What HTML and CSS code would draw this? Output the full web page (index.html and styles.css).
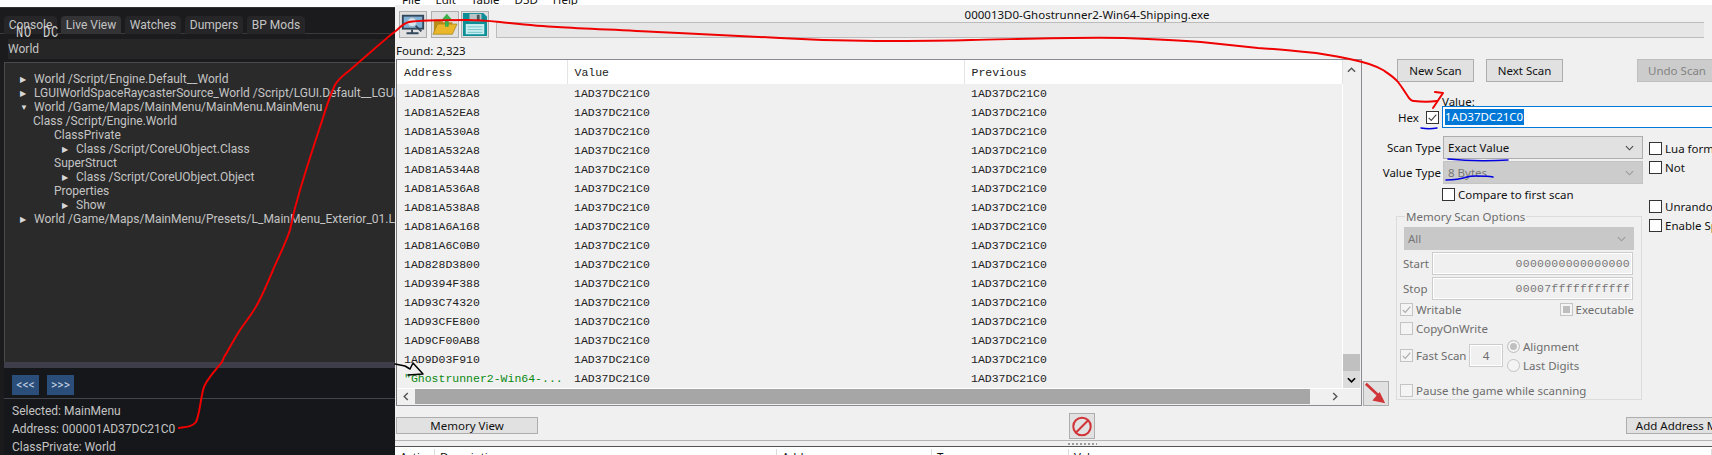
FILE: index.html
```html
<!DOCTYPE html>
<html lang="en">
<head>
<meta charset="UTF-8">
<title>Cheat Engine scan</title>
<link rel="stylesheet" href="styles.css">
</head>
<body>
<div class="page">

  <div class="dbg">
    <div class="dbg-strip"></div>
    <div class="dbg-tabs">
      <span class="tab tab-console">Console</span>
      <span class="tab tab-live">Live View</span>
      <span class="tab tab-watches">Watches</span>
      <span class="tab tab-dumpers">Dumpers</span>
      <span class="tab tab-bp">BP Mods</span>
    </div>
    <div class="dbg-search">World</div>
    <div class="dbg-tree">
      <div class="node"><span class="tw">&#9654;</span>World /Script/Engine.Default__World</div>
      <div class="node"><span class="tw">&#9654;</span>LGUIWorldSpaceRaycasterSource_World /Script/LGUI.Default__LGUIWorldSpaceRaycasterSource_World</div>
      <div class="node"><span class="tw">&#9660;</span>World /Game/Maps/MainMenu/MainMenu.MainMenu</div>
      <div class="node lvl1">Class /Script/Engine.World</div>
      <div class="node lvl2">ClassPrivate</div>
      <div class="node lvl3"><span class="tw">&#9654;</span>Class /Script/CoreUObject.Class</div>
      <div class="node lvl2">SuperStruct</div>
      <div class="node lvl3"><span class="tw">&#9654;</span>Class /Script/CoreUObject.Object</div>
      <div class="node lvl2">Properties</div>
      <div class="node lvl3"><span class="tw">&#9654;</span>Show</div>
      <div class="node"><span class="tw">&#9654;</span>World /Game/Maps/MainMenu/Presets/L_MainMenu_Exterior_01.L_MainMenu_Exterior_01</div>
    </div>
    <div class="dbg-split"></div>
    <div class="dbg-info">
      <div class="dbg-nav">
        <button class="nav-btn">&lt;&lt;&lt;</button>
        <button class="nav-btn">&gt;&gt;&gt;</button>
      </div>
      <div class="info-line">Selected: MainMenu</div>
      <div class="info-line">Address: 000001AD37DC21C0</div>
      <div class="info-line">ClassPrivate: World</div>
    </div>
  </div>

  <div class="ce">
    <div class="ce-menu"><span><u>F</u>ile</span><span><u>E</u>dit</span><span><u>T</u>able</span><span><u>D</u>3D</span><span><u>H</u>elp</span></div>
    <div class="ce-top">
      <div class="tools">
        <button class="tool">
          <svg viewBox="0 0 28 27" width="26" height="25"><rect x="2" y="3" width="24" height="16" fill="#33475b"/><rect x="4" y="5" width="20" height="12" fill="#7fb2d6"/><circle cx="13" cy="11" r="5" fill="#d5e6f2" stroke="#9ab3c6" stroke-width="1.5"/><path d="M17 15l6 6" stroke="#33475b" stroke-width="2"/><path d="M13 19v3M7 23h13" stroke="#33475b" stroke-width="2"/></svg>
        </button>
        <button class="tool">
          <svg viewBox="0 0 28 27" width="26" height="25"><path d="M2 8h8l2 3h10v12H2z" fill="#b98f1c"/><path d="M6 13h21l-5 11H1z" fill="#eab72b" stroke="#9a7a18" stroke-width=".7"/><path d="M14 16V9h-4l6-7 6 7h-4v7z" fill="#3cb04a"/></svg>
        </button>
        <button class="tool">
          <svg viewBox="0 0 28 27" width="26" height="25"><path d="M1 1h22l4 4v21H1z" fill="#0e8f97"/><rect x="8" y="2" width="13" height="8" fill="#b9c4c6"/><rect x="16" y="3" width="3" height="6" fill="#46585c"/><rect x="4" y="13" width="20" height="11" fill="#c9eef0"/><path d="M6 16h16M6 19h16M6 22h16" stroke="#6fc2c8"/></svg>
        </button>
      </div>
      <div class="top-right">
        <div class="ce-title">000013D0-Ghostrunner2-Win64-Shipping.exe</div>
        <div class="ce-progress"></div>
      </div>
    </div>

    <div class="ce-main">
      <div class="results">
        <div class="found">Found: 2,323</div>
        <div class="list-row">
          <div class="list">
            <div class="list-top">
              <table class="hits">
                <thead>
                  <tr><th class="col-addr">Address</th><th class="col-val">Value</th><th>Previous</th></tr>
                </thead>
                <tbody>
                  <tr><td>1AD81A528A8</td><td>1AD37DC21C0</td><td>1AD37DC21C0</td></tr>
                  <tr><td>1AD81A52EA8</td><td>1AD37DC21C0</td><td>1AD37DC21C0</td></tr>
                  <tr><td>1AD81A530A8</td><td>1AD37DC21C0</td><td>1AD37DC21C0</td></tr>
                  <tr><td>1AD81A532A8</td><td>1AD37DC21C0</td><td>1AD37DC21C0</td></tr>
                  <tr><td>1AD81A534A8</td><td>1AD37DC21C0</td><td>1AD37DC21C0</td></tr>
                  <tr><td>1AD81A536A8</td><td>1AD37DC21C0</td><td>1AD37DC21C0</td></tr>
                  <tr><td>1AD81A538A8</td><td>1AD37DC21C0</td><td>1AD37DC21C0</td></tr>
                  <tr><td>1AD81A6A168</td><td>1AD37DC21C0</td><td>1AD37DC21C0</td></tr>
                  <tr><td>1AD81A6C0B0</td><td>1AD37DC21C0</td><td>1AD37DC21C0</td></tr>
                  <tr><td>1AD828D3800</td><td>1AD37DC21C0</td><td>1AD37DC21C0</td></tr>
                  <tr><td>1AD9394F388</td><td>1AD37DC21C0</td><td>1AD37DC21C0</td></tr>
                  <tr><td>1AD93C74320</td><td>1AD37DC21C0</td><td>1AD37DC21C0</td></tr>
                  <tr><td>1AD93CFE800</td><td>1AD37DC21C0</td><td>1AD37DC21C0</td></tr>
                  <tr><td>1AD9CF00AB8</td><td>1AD37DC21C0</td><td>1AD37DC21C0</td></tr>
                  <tr><td>1AD9D03F910</td><td>1AD37DC21C0</td><td>1AD37DC21C0</td></tr>
                  <tr><td class="static">"Ghostrunner2-Win64-...</td><td>1AD37DC21C0</td><td>1AD37DC21C0</td></tr>
                </tbody>
              </table>
              <div class="vscroll">
                <svg class="chev-up" viewBox="0 0 10 6" width="9" height="6"><path d="M1 5l4-4 4 4" fill="none" stroke="#555" stroke-width="1.6"/></svg>
                <div class="vthumb"></div>
                <div class="vdown"><svg viewBox="0 0 10 6" width="9" height="6"><path d="M1 1l4 4 4-4" fill="none" stroke="#000" stroke-width="1.8"/></svg></div>
              </div>
            </div>
            <div class="hscroll">
              <div class="harrow"><svg viewBox="0 0 6 10" width="6" height="9"><path d="M5 1L1 5l4 4" fill="none" stroke="#555" stroke-width="1.6"/></svg></div>
              <div class="hthumb"></div>
              <div class="harrow harrow-r"><svg viewBox="0 0 6 10" width="6" height="9"><path d="M1 1l4 4-4 4" fill="none" stroke="#555" stroke-width="1.6"/></svg></div>
            </div>
          </div>
          <button class="tool tool-arrow">
            <svg viewBox="0 0 26 25" width="24" height="23"><path d="M2 2l14 13" stroke="#d13438" stroke-width="3"/><path d="M23 23l-14-3 8-9z" fill="#d13438"/></svg>
          </button>
        </div>
      </div>

      <div class="scan">
        <div class="scan-btns">
          <button class="btn">New Scan</button>
          <button class="btn">Next Scan</button>
          <button class="btn btn-off">Undo Scan</button>
        </div>
        <div class="value-label">Value:</div>
        <div class="value-row">
          <span class="hex">Hex</span>
          <span class="check"><svg viewBox="0 0 13 13" width="11" height="11"><path d="M2 7l3 3 6-7" fill="none" stroke="#444" stroke-width="1.3"/></svg></span>
          <div class="value-input"><span class="sel">1AD37DC21C0</span></div>
        </div>
        <div class="scan-body">
          <div class="scan-main">
            <div class="field">
              <label class="field-label">Scan Type</label>
              <div class="select">Exact Value<svg class="caret" viewBox="0 0 10 6" width="9" height="6"><path d="M1 1l4 4 4-4" fill="none" stroke="#444" stroke-width="1.2"/></svg></div>
            </div>
            <div class="field field-next">
              <label class="field-label">Value Type</label>
              <div class="select select-off">8 Bytes<svg class="caret" viewBox="0 0 10 6" width="9" height="6"><path d="M1 1l4 4 4-4" fill="none" stroke="#999" stroke-width="1.2"/></svg></div>
            </div>
            <div class="compare"><span class="check"></span>Compare to first scan</div>

            <div class="group">
              <div class="group-title">Memory Scan Options</div>
              <div class="select select-off select-all">All<svg class="caret" viewBox="0 0 10 6" width="9" height="6"><path d="M1 1l4 4 4-4" fill="none" stroke="#999" stroke-width="1.2"/></svg></div>
              <div class="range"><span class="range-label">Start</span><div class="range-input">0000000000000000</div></div>
              <div class="range"><span class="range-label">Stop</span><div class="range-input">00007fffffffffff</div></div>
              <div class="opt-row opt-first">
                <span class="opt"><span class="check check-off"><svg viewBox="0 0 13 13" width="11" height="11"><path d="M2 7l3 3 6-7" fill="none" stroke="#aaa" stroke-width="1.3"/></svg></span>Writable</span>
                <span class="opt"><span class="check check-off"><i class="mixed"></i></span>Executable</span>
              </div>
              <div class="opt-row"><span class="opt"><span class="check check-off"></span>CopyOnWrite</span></div>
              <div class="fast">
                <span class="opt"><span class="check check-off"><svg viewBox="0 0 13 13" width="11" height="11"><path d="M2 7l3 3 6-7" fill="none" stroke="#aaa" stroke-width="1.3"/></svg></span>Fast Scan</span>
                <div class="fast-input">4</div>
                <div class="radios">
                  <span class="opt"><span class="radio radio-on"></span>Alignment</span>
                  <span class="opt"><span class="radio"></span>Last Digits</span>
                </div>
              </div>
              <div class="opt-row opt-pause"><span class="opt"><span class="check check-off"></span>Pause the game while scanning</span></div>
            </div>
          </div>
          <div class="scan-side">
            <div class="side-opt"><span class="check"></span>Lua formula</div>
            <div class="side-opt"><span class="check"></span>Not</div>
            <div class="side-opt side-gap"><span class="check"></span>Unrandomizer</div>
            <div class="side-opt"><span class="check"></span>Enable Speedhack</div>
          </div>
        </div>
      </div>
    </div>

    <div class="ce-bar">
      <button class="btn btn-mem">Memory View</button>
      <button class="tool tool-stop">
        <svg viewBox="0 0 26 25" width="24" height="23"><circle cx="13" cy="12.5" r="9.5" fill="none" stroke="#d13438" stroke-width="2.2"/><path d="M6.5 19L19.5 6" stroke="#d13438" stroke-width="2.2"/></svg>
      </button>
      <button class="btn btn-add">Add Address Manually</button>
    </div>
    <div class="ce-grip"><span class="dots"></span></div>
    <div class="ce-table-head">
      <span class="th-active">Active</span>
      <span class="th-desc">Description</span>
      <span class="th-addr">Address</span>
      <span class="th-type">Type</span>
      <span class="th-value">Value</span>
    </div>
  </div>

  <div class="nodc">NO DC</div>

  <svg class="ink" viewBox="0 0 1712 455" width="1712" height="455">
    <path class="ink-red" d="M179 428C186 427 192 427 196 422C199 416 200 404 203 390C205 380 216 370 222 362C224 358 224 356 226 354C231 345 235 338 240 330C246 321 253 313 258 303C264 292 268 282 273 270C278 258 285 245 290 230C293 215 296 203 300 190C306 170 313 148 320 127C325 112 329 97 335 85C339 78 344 75 350 70C358 63 365 57 373 50C381 43 389 36 397 30C401 26 404 23 409 22C420 20 440 20 467 20C480 20 490 21 500 22C520 24 538 26 557 27C590 29 624 30 657 32C700 34 745 36 780 38C812 40 845 41 876 41C908 41 940 41 971 40C1022 39 1073 37 1124 38C1150 39 1175 40 1201 42C1220 44 1239 46 1258 48C1278 49 1297 51 1316 53C1329 55 1342 57 1354 60C1364 62 1374 65 1383 70C1389 74 1394 77 1398 82C1402 87 1404 91 1407 95C1409 98 1410 101 1414 101C1422 102 1430 102 1437 101"/>
    <path class="ink-red" d="M1433 108L1443 93L1435 92"/>
    <path class="ink-blue" d="M1421 128C1426 129 1432 129 1437 128"/>
    <path class="ink-blue" d="M1448 159C1468 161 1488 161 1508 160"/>
    <path class="ink-blue" d="M1446 180C1453 180 1461 179 1467 177C1470 176 1473 176 1476 176C1482 176 1488 176 1493 177"/>
    <path class="ink-black" d="M395 364L405 366L410 369L413 363L423 374L408 375"/>
  </svg>
</div>
</body>
</html>
```

FILE: styles.css
```css
* {
  box-sizing: border-box;
}
html, body {
  margin: 0;
  padding: 0;
  height: 100%;
  overflow: hidden;
}
body {
  font-family: "Noto Sans", Arial, sans-serif;
}
button {
  font-family: inherit;
  margin: 0;
  padding: 0;
}
.page {
  position: relative;
  display: flex;
  width: 1712px;
  height: 455px;
  overflow: hidden;
}

/* debugger panel on the left */
.dbg {
  width: 395px;
  height: 455px;
  flex: none;
  display: flex;
  flex-direction: column;
  background-color: #1b1b1d;
  color: #c4c4c4;
  font-family: Roboto, Arial, sans-serif;
  font-size: 12px;
  overflow: hidden;
}
.dbg-strip {
  height: 8px;
  background-color: #fff;
  border-bottom: 1px solid #333;
  flex: none;
}
.dbg-tabs {
  display: flex;
  height: 26px;
  padding: 8px 0 0 4px;
  gap: 4px;
  border-bottom: 1px solid #3a3a3a;
  flex: none;
}
.tab {
  height: 18px;
  line-height: 18px;
  background-color: #262628;
  border-radius: 4px 4px 0 0;
  text-align: center;
  white-space: nowrap;
}
.tab-console { width: 53px; }
.tab-live { width: 60px; background-color: #333335; }
.tab-watches { width: 56px; }
.tab-dumpers { width: 58px; }
.tab-bp { width: 58px; }
.dbg-search {
  margin: 5px 0 0 8px;
  height: 20px;
  line-height: 20px;
  background-color: #262626;
  flex: none;
}
.dbg-tree {
  height: 300px;
  margin: 3px 0 0 4px;
  padding: 9px 0 0 15px;
  background-color: #2a2a2a;
  border: 1px solid #4a4a4a;
  border-width: 1px 0 0 1px;
  flex: none;
  overflow: hidden;
}
.node {
  height: 14px;
  line-height: 14px;
  white-space: nowrap;
}
.tw {
  display: inline-block;
  width: 14px;
  font-size: 8px;
  vertical-align: 1px;
  color: #d8d8d8;
}
.lvl1 { padding-left: 13px; }
.lvl2 { padding-left: 34px; }
.lvl3 { padding-left: 42px; }
.dbg-split {
  height: 6px;
  margin-left: 4px;
  background-color: #3e3e4a;
  flex: none;
}
.dbg-info {
  flex: 1;
  margin-left: 4px;
  background-color: #16171a;
}
.dbg-nav {
  display: flex;
  gap: 8px;
  height: 31px;
  padding: 7px 0 0 8px;
  border-bottom: 1px solid #44444c;
}
.nav-btn {
  width: 27px;
  height: 20px;
  border: none;
  background-color: #2a4d7a;
  color: #c8d4e2;
  font-size: 12px;
}
.info-line {
  height: 18px;
  line-height: 18px;
  padding-left: 8px;
  white-space: nowrap;
}
.dbg-info .dbg-nav + .info-line {
  margin-top: 3px;
}

/* cheat engine window */
.ce {
  flex: 1;
  height: 455px;
  background-color: #f0f0f0;
  color: #111;
  font-size: 11.5px;
  display: flex;
  flex-direction: column;
  overflow: hidden;
}
.ce-menu {
  height: 5px;
  background-color: #fff;
  overflow: hidden;
  display: flex;
  gap: 15px;
  padding-left: 7px;
  line-height: 1px;
  flex: none;
}
.ce-menu span {
  margin-top: -1px;
}
.ce-top {
  display: flex;
  height: 39px;
  flex: none;
}
.tools {
  width: 101px;
  display: flex;
  gap: 2px;
  padding: 6px 0 0 4px;
  flex: none;
}
.tools .tool + .tool { margin-left: 2px; }
.tools .tool:last-child { margin-left: 0; }
.tool {
  width: 28px;
  height: 27px;
  background-color: #e1e1e1;
  border: 1px solid #adadad;
  display: flex;
  align-items: center;
  justify-content: center;
  flex: none;
}
.top-right {
  flex: 1;
}
.ce-title {
  height: 17px;
  line-height: 20px;
  padding-right: 34px;
  text-align: center;
  white-space: nowrap;
}
.ce-progress {
  height: 16px;
  margin-right: 8px;
  background-color: #e6e6e6;
  border: 1px solid #bcbcbc;
  border-right: none;
}
.ce-main {
  display: flex;
  height: 362px;
  flex: none;
}
.results {
  width: 994px;
  padding-left: 1px;
  flex: none;
}
.found {
  height: 15px;
  line-height: 13px;
}
.list-row {
  display: flex;
  gap: 1px;
  align-items: flex-end;
}
.list {
  width: 966px;
  height: 347px;
  border: 1px solid #8a8a94;
  border-left-color: #777;
  flex: none;
}
.list-top {
  display: flex;
  height: 328px;
}
.hits {
  width: 946px;
  border-collapse: collapse;
  table-layout: fixed;
  font-family: "Liberation Mono", "Courier New", monospace;
  font-size: 11.5px;
  color: #222;
  border-right: 1px solid #fff;
}
.hits th {
  height: 24px;
  padding: 0 0 0 7px;
  background-color: #fff;
  font-weight: normal;
  text-align: left;
  border-right: 1px solid #e4e4e4;
}
.hits td {
  height: 19px;
  padding: 0 0 0 7px;
  white-space: nowrap;
}
.col-addr { width: 170px; }
.col-val { width: 397px; }
.static { color: #0a8a12; }
.vscroll {
  width: 17px;
  display: flex;
  flex-direction: column;
  align-items: center;
  flex: none;
}
.chev-up {
  margin-top: 7px;
}
.vthumb {
  margin-top: auto;
  width: 100%;
  height: 17px;
  background-color: #c0c0c0;
}
.vdown {
  width: 100%;
  height: 17px;
  background-color: #dcdcdc;
  display: flex;
  align-items: center;
  justify-content: center;
}
.hscroll {
  display: flex;
  height: 16px;
  border-top: 1px solid #fff;
}
.harrow {
  width: 18px;
  display: flex;
  align-items: center;
  justify-content: center;
  flex: none;
}
.hthumb {
  width: 895px;
  background-color: #a6a6a6;
  flex: none;
}
.harrow-r {
  margin-left: 16px;
}
.tool-arrow {
  width: 26px;
  height: 25px;
}

/* scan settings */
.scan {
  flex: 1;
  min-width: 0;
}
.scan-btns {
  display: flex;
  gap: 12px;
  padding: 15px 0 0 8px;
}
.btn {
  width: 77px;
  height: 23px;
  background-color: #e1e1e1;
  border: 1px solid #adadad;
  color: #111;
  font-size: 11.5px;
  white-space: nowrap;
  flex: none;
}
.btn-off {
  width: 80px;
  margin-left: 62px;
  background-color: #ccc;
  color: #838383;
  border-color: #bfbfbf;
}
.value-label {
  height: 14px;
  line-height: 20px;
  margin: 10px 0 0 53px;
}
.value-row {
  display: flex;
  align-items: center;
  height: 22px;
}
.hex {
  width: 37px;
  padding-left: 9px;
  flex: none;
}
.check {
  display: inline-flex;
  align-items: center;
  justify-content: center;
  width: 13px;
  height: 13px;
  background-color: #fff;
  border: 1px solid #333;
  flex: none;
}
.check-off {
  background-color: #f4f4f4;
  border-color: #c4c4c4;
}
.mixed {
  width: 7px;
  height: 7px;
  background-color: #bdbdbd;
}
.value-input {
  margin-left: 3px;
  flex: 1;
  height: 22px;
  padding-left: 2px;
  line-height: 18px;
  background-color: #fff;
  border: 1px solid #0078d7;
  border-right: none;
  white-space: nowrap;
}
.sel {
  display: inline-block;
  height: 16px;
  line-height: 15px;
  margin-top: 2px;
  padding-right: 1px;
  background-color: #0078d7;
  color: #fff;
}
.scan-body {
  display: flex;
  margin-top: 8px;
}
.scan-main {
  width: 253px;
  flex: none;
}
.field {
  display: flex;
  align-items: center;
  gap: 2px;
}
.field-next {
  margin-top: 2px;
}
.field-label {
  display: flex;
  justify-content: flex-end;
  width: 52px;
  white-space: nowrap;
  flex: none;
}
.select {
  display: flex;
  align-items: center;
  justify-content: space-between;
  width: 200px;
  height: 23px;
  padding: 0 8px 0 4px;
  background-color: #e1e1e1;
  border: 1px solid #adadad;
  flex: none;
}
.select-off {
  background-color: #ccc;
  border-color: #c4c4c4;
  color: #777;
}
.compare {
  display: flex;
  align-items: center;
  gap: 3px;
  height: 14px;
  margin: 3px 0 0 53px;
}
.group {
  width: 246px;
  height: 184px;
  margin: 15px 0 0 7px;
  padding: 0 7px;
  border: 1px solid #dcdcdc;
  color: #6d6d6d;
}
.group-title {
  height: 14px;
  line-height: 14px;
  width: max-content;
  margin: -7px 0 0 1px;
  padding: 0 1px;
  background-color: #f0f0f0;
}
.select-all {
  width: 230px;
  margin-top: 3px;
  background-color: #c8c8c8;
  border: none;
}
.range {
  display: flex;
  align-items: center;
  height: 23px;
  margin-top: 2px;
}
.range-label {
  width: 29px;
  flex: none;
  margin-left: -1px;
}
.range-input {
  width: 201px;
  height: 23px;
  line-height: 21px;
  padding-right: 2px;
  text-align: right;
  font-family: "Liberation Mono", monospace;
  font-size: 11.5px;
  color: #777;
  letter-spacing: .25px;
  border: 1px solid #ccc;
  box-shadow: inset 0 0 0 1px #fff;
}
.opt-row {
  display: flex;
  justify-content: space-between;
  height: 13px;
  margin: 6px 0 0 -4px;
}
.opt-first {
  margin-top: 3px;
}
.opt {
  display: inline-flex;
  align-items: center;
  gap: 3px;
  white-space: nowrap;
}
.fast {
  display: flex;
  align-items: center;
  height: 27px;
  margin: 7px 0 0 -4px;
}
.fast .opt {
  width: 69px;
  flex: none;
}
.fast-input {
  width: 34px;
  height: 23px;
  line-height: 21px;
  text-align: center;
  border: 1px solid #ccc;
  box-shadow: inset 0 0 0 1px #fff;
  flex: none;
}
.radios {
  display: flex;
  flex-direction: column;
  gap: 6px;
  margin-left: 4px;
}
.radios .opt {
  width: auto;
  height: 13px;
}
.radio {
  width: 13px;
  height: 13px;
  border: 1px solid #c4c4c4;
  border-radius: 50%;
  background-color: #f4f4f4;
  flex: none;
}
.radio-on {
  background-color: #c0c0c0;
  box-shadow: inset 0 0 0 2px #f4f4f4;
}
.opt-pause {
  margin-top: 15px;
}
.scan-side {
  padding: 5px 0 0 7px;
  white-space: nowrap;
}
.side-opt {
  display: flex;
  align-items: center;
  gap: 3px;
  height: 14px;
  margin-bottom: 5px;
}
.side-gap {
  margin-top: 25px;
}
.ce-bar {
  display: flex;
  height: 34px;
  padding-left: 1px;
  flex: none;
  align-items: flex-start;
}
.btn-mem {
  width: 142px;
  height: 17px;
  line-height: 14px;
  margin-top: 11px;
}
.tool-stop {
  width: 26px;
  height: 26px;
  margin: 7px 0 0 531px;
}
.btn-add {
  width: 140px;
  height: 17px;
  line-height: 14px;
  margin: 11px 0 0 531px;
}
.ce-grip {
  height: 7px;
  border-top: 1px solid #b4b4b4;
  border-bottom: 1px solid #555;
  display: flex;
  padding: 2px 0 0 673px;
  flex: none;
}
.dots {
  width: 29px;
  height: 2px;
  background-image: repeating-linear-gradient(90deg, #9a9a9a 0 2px, transparent 2px 4px);
}
.ce-table-head {
  flex: 1;
  display: grid;
  grid-template-columns: 40px 342px 155px 137px 1fr;
  padding-top: 2px;
  background-color: #fff;
  line-height: 16px;
  overflow: hidden;
}
.ce-table-head span {
  padding-left: 5px;
  border-right: 1px solid #ddd;
}

/* things lying over the panels */
.nodc {
  position: absolute;
  left: 16px;
  top: 26px;
  font-family: "Liberation Mono", monospace;
  font-size: 12px;
  letter-spacing: .8px;
  word-spacing: 3px;
  color: #d0d0d0;
  transform: scaleY(1.4);
}
.ink {
  position: absolute;
  left: 0;
  top: 0;
  pointer-events: none;
}
.ink path {
  fill: none;
  stroke-linecap: round;
  stroke-linejoin: round;
}
.ink-red {
  stroke: #f00000;
  stroke-width: 2;
}
.ink-blue {
  stroke: #0000e0;
  stroke-width: 1.5;
}
.ink-black {
  stroke: #000;
  stroke-width: 1.5;
}
```
